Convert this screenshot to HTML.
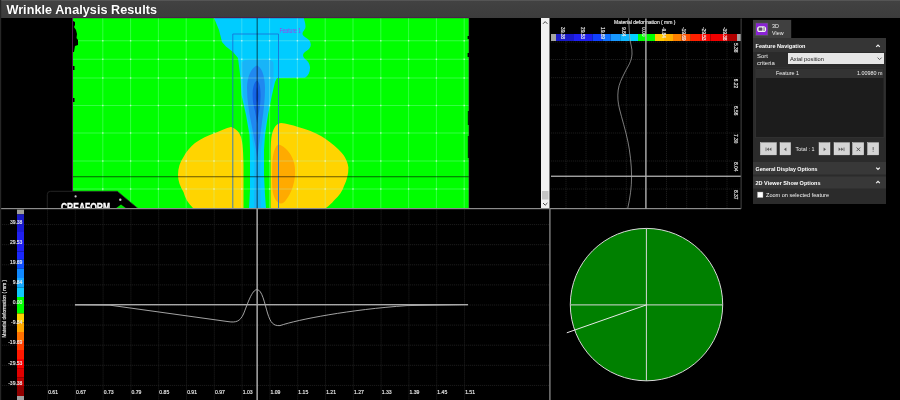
<!DOCTYPE html>
<html>
<head>
<meta charset="utf-8">
<title>Wrinkle Analysis Results</title>
<style>
  html, body { margin: 0; padding: 0; background: #000; }
  body { width: 900px; height: 400px; overflow: hidden; position: relative;
         font-family: "Liberation Sans", sans-serif; color: #fff; }
  #stage { position: absolute; left: 0; top: 0; width: 900px; height: 400px; display: block; will-change: transform; }
  #bl text, #tr text { stroke: #e8e8e8; stroke-width: 0.15px; }
</style>
</head>
<body>
<svg id="stage" width="900" height="400" viewBox="0 0 900 400"
     font-family="Liberation Sans, sans-serif">
  <defs>
    <linearGradient id="hdr" x1="0" y1="0" x2="0" y2="1">
      <stop offset="0" stop-color="#424242"/>
      <stop offset="1" stop-color="#3c3c3c"/>
    </linearGradient>
    <clipPath id="clipTL"><rect x="0" y="18" width="541" height="190.5"/></clipPath>
    <clipPath id="clipGreen"><rect x="72" y="17" width="397.5" height="191"/></clipPath>
  </defs>

  <!-- background -->
  <rect x="0" y="0" width="900" height="400" fill="#000"/>

  <!-- ===== header ===== -->
  <rect x="0" y="0" width="900" height="18" fill="url(#hdr)"/>
  <rect x="0" y="0" width="900" height="1" fill="#555"/>
  <text x="7" y="14" font-size="12.6" font-weight="bold" fill="#000" opacity="0.6" textLength="150.6" lengthAdjust="spacingAndGlyphs">Wrinkle Analysis Results</text>
  <text x="6.4" y="13.5" font-size="12.6" font-weight="bold" fill="#fff" textLength="150.6" lengthAdjust="spacingAndGlyphs">Wrinkle Analysis Results</text>

  <!-- ===== top-left: contour map ===== -->
  <g id="map" clip-path="url(#clipGreen)">
    <rect x="73" y="18" width="396" height="190" fill="#00ff00"/>
    <!-- light cyan -->
    <path fill="#00ccff" d="M214,18 L303.8,18 C304.5,21 305.5,23.5 305.5,26.5 C305.5,30 302.5,31 302.5,34 C303,37.5 310.5,38 310.8,44.5 C310.8,50.5 303.5,51 303,55 C303,59.5 309.5,60 310,67 C310.2,72 308.5,75.5 305,77.8 L277,78 L275,82 L272,95 L268,115 L265,135 L264,150 L264,175 L265,195 L266,208 L249,208 L250,190 L250,150 L249.5,135 L246,115 L241.5,95 L240.5,78 L238,58 L233,52 L226,46.5 L222,42 L219,30 Z"/>
    <!-- sky blue -->
    <path fill="#18b4f8" d="M241.5,63 C243,60.5 246,59.6 250,59.6 L266,59.6 C270,59.6 272.5,60.5 273.5,63 L273.5,78 L270.5,95 L267.5,112 L264,130 L260.8,150 L260.2,175 L260.8,208 L254,208 L254.3,175 L254.3,150 L250.5,130 L246.5,112 L243.5,95 L242.5,78 Z"/>
    <!-- mid blue teardrop -->
    <path fill="#2088f0" d="M257,65.5 C261.5,67 265,76 265,88 C265,100 263.5,112 262,122 C260.8,132 258.8,146 257.3,158 C255.6,146 253,132 251,122 C249,112 247,100 247,88 C247,76 252,67 257,65.5 Z"/>
    <!-- dark blue -->
    <path fill="#1464e4" d="M257,80.5 C259.6,82 260.6,88 260.6,95 C260.6,101 260,106 259.3,110 C258.6,114 257.8,119 257.2,124 C256.5,119 255.5,114 254.7,110 C253.6,106 252.6,101 252.6,95 C252.6,88 254,82 257,80.5 Z"/>
    <path fill="#0c54d8" d="M257,87 C258.1,89 258.4,93 258.4,96 C258.4,99 258,101 257.2,103 C256.3,101 255.8,99 255.8,96 C255.8,93 256.1,89 257,87 Z"/>

    <!-- yellow lobes -->
    <path fill="#ffd400" d="M231,127 C235,128.3 239,131 241,137 C242.8,143 243.3,152 243.5,165 L243.5,208 L193,208 C188,203 185,198 183.5,192 C180,186 178,181 178,175 C178,168 180,162 183.5,157 C186,152 190,147 195,143 C201,138.5 208,135.5 215,133 C221,130.5 226,128 231,127 Z"/>
    <path fill="#ffd400" d="M281,123 C276,123.5 272.5,129 271.3,138 C270.6,144 270.6,152 270.6,160 L270.6,208 L326,208 C329,205.5 332,203 334,200.5 C339,196 342.5,191 344,186 C347,180 348.5,174 348.4,167.6 C347.5,160 343.5,154 338,149 C333,144 327.5,140 321,136 C314,132 306,129 298,127 C292,125 286,123.5 281,123 Z"/>
    <!-- orange -->
    <path fill="#ffaa00" d="M279,144.6 C285,146.5 291,153 293.5,161 C295,165 295.3,170 295,175 C294.5,184 291,194 286,200 C284.5,202 283,203.5 281,203.5 C277,203.5 273.5,198 272.5,190 C272,184 272,170 272.3,163 C272.8,154 275,145 279,144.6 Z"/>
    <!-- grid -->
    <g stroke="#b0ffe0" stroke-width="0.8" opacity="0.38">
      <line x1="102.8" y1="18" x2="102.8" y2="208"/>
      <line x1="130.6" y1="18" x2="130.6" y2="208"/>
      <line x1="158.4" y1="18" x2="158.4" y2="208"/>
      <line x1="186.2" y1="18" x2="186.2" y2="208"/>
      <line x1="214.0" y1="18" x2="214.0" y2="208"/>
      <line x1="241.8" y1="18" x2="241.8" y2="208"/>
      <line x1="269.6" y1="18" x2="269.6" y2="208"/>
      <line x1="297.4" y1="18" x2="297.4" y2="208"/>
      <line x1="325.2" y1="18" x2="325.2" y2="208"/>
      <line x1="353.0" y1="18" x2="353.0" y2="208"/>
      <line x1="380.8" y1="18" x2="380.8" y2="208"/>
      <line x1="408.6" y1="18" x2="408.6" y2="208"/>
      <line x1="436.4" y1="18" x2="436.4" y2="208"/>
      <line x1="464.2" y1="18" x2="464.2" y2="208"/>
      <line x1="73" y1="40.75" x2="469" y2="40.75"/>
      <line x1="73" y1="59.25" x2="469" y2="59.25"/>
      <line x1="73" y1="78" x2="469" y2="78"/>
      <line x1="73" y1="105.5" x2="469" y2="105.5"/>
      <line x1="73" y1="133" x2="469" y2="133"/>
      <line x1="73" y1="161" x2="469" y2="161"/>
      <line x1="73" y1="189" x2="469" y2="189"/>
    </g>
    <g fill="#ffffff" opacity="0.6">
      <rect x="102.1" y="40.05" width="1.4" height="1.4"/>
      <rect x="102.1" y="58.55" width="1.4" height="1.4"/>
      <rect x="102.1" y="77.30" width="1.4" height="1.4"/>
      <rect x="102.1" y="104.80" width="1.4" height="1.4"/>
      <rect x="102.1" y="132.30" width="1.4" height="1.4"/>
      <rect x="102.1" y="160.30" width="1.4" height="1.4"/>
      <rect x="102.1" y="188.30" width="1.4" height="1.4"/>
      <rect x="129.9" y="40.05" width="1.4" height="1.4"/>
      <rect x="129.9" y="58.55" width="1.4" height="1.4"/>
      <rect x="129.9" y="77.30" width="1.4" height="1.4"/>
      <rect x="129.9" y="104.80" width="1.4" height="1.4"/>
      <rect x="129.9" y="132.30" width="1.4" height="1.4"/>
      <rect x="129.9" y="160.30" width="1.4" height="1.4"/>
      <rect x="129.9" y="188.30" width="1.4" height="1.4"/>
      <rect x="157.7" y="40.05" width="1.4" height="1.4"/>
      <rect x="157.7" y="58.55" width="1.4" height="1.4"/>
      <rect x="157.7" y="77.30" width="1.4" height="1.4"/>
      <rect x="157.7" y="104.80" width="1.4" height="1.4"/>
      <rect x="157.7" y="132.30" width="1.4" height="1.4"/>
      <rect x="157.7" y="160.30" width="1.4" height="1.4"/>
      <rect x="157.7" y="188.30" width="1.4" height="1.4"/>
      <rect x="185.5" y="40.05" width="1.4" height="1.4"/>
      <rect x="185.5" y="58.55" width="1.4" height="1.4"/>
      <rect x="185.5" y="77.30" width="1.4" height="1.4"/>
      <rect x="185.5" y="104.80" width="1.4" height="1.4"/>
      <rect x="185.5" y="132.30" width="1.4" height="1.4"/>
      <rect x="185.5" y="160.30" width="1.4" height="1.4"/>
      <rect x="185.5" y="188.30" width="1.4" height="1.4"/>
      <rect x="213.3" y="40.05" width="1.4" height="1.4"/>
      <rect x="213.3" y="58.55" width="1.4" height="1.4"/>
      <rect x="213.3" y="77.30" width="1.4" height="1.4"/>
      <rect x="213.3" y="104.80" width="1.4" height="1.4"/>
      <rect x="213.3" y="132.30" width="1.4" height="1.4"/>
      <rect x="213.3" y="160.30" width="1.4" height="1.4"/>
      <rect x="213.3" y="188.30" width="1.4" height="1.4"/>
      <rect x="241.1" y="40.05" width="1.4" height="1.4"/>
      <rect x="241.1" y="58.55" width="1.4" height="1.4"/>
      <rect x="241.1" y="77.30" width="1.4" height="1.4"/>
      <rect x="241.1" y="104.80" width="1.4" height="1.4"/>
      <rect x="241.1" y="132.30" width="1.4" height="1.4"/>
      <rect x="241.1" y="160.30" width="1.4" height="1.4"/>
      <rect x="241.1" y="188.30" width="1.4" height="1.4"/>
      <rect x="268.9" y="40.05" width="1.4" height="1.4"/>
      <rect x="268.9" y="58.55" width="1.4" height="1.4"/>
      <rect x="268.9" y="77.30" width="1.4" height="1.4"/>
      <rect x="268.9" y="104.80" width="1.4" height="1.4"/>
      <rect x="268.9" y="132.30" width="1.4" height="1.4"/>
      <rect x="268.9" y="160.30" width="1.4" height="1.4"/>
      <rect x="268.9" y="188.30" width="1.4" height="1.4"/>
      <rect x="296.7" y="40.05" width="1.4" height="1.4"/>
      <rect x="296.7" y="58.55" width="1.4" height="1.4"/>
      <rect x="296.7" y="77.30" width="1.4" height="1.4"/>
      <rect x="296.7" y="104.80" width="1.4" height="1.4"/>
      <rect x="296.7" y="132.30" width="1.4" height="1.4"/>
      <rect x="296.7" y="160.30" width="1.4" height="1.4"/>
      <rect x="296.7" y="188.30" width="1.4" height="1.4"/>
      <rect x="324.5" y="40.05" width="1.4" height="1.4"/>
      <rect x="324.5" y="58.55" width="1.4" height="1.4"/>
      <rect x="324.5" y="77.30" width="1.4" height="1.4"/>
      <rect x="324.5" y="104.80" width="1.4" height="1.4"/>
      <rect x="324.5" y="132.30" width="1.4" height="1.4"/>
      <rect x="324.5" y="160.30" width="1.4" height="1.4"/>
      <rect x="324.5" y="188.30" width="1.4" height="1.4"/>
      <rect x="352.3" y="40.05" width="1.4" height="1.4"/>
      <rect x="352.3" y="58.55" width="1.4" height="1.4"/>
      <rect x="352.3" y="77.30" width="1.4" height="1.4"/>
      <rect x="352.3" y="104.80" width="1.4" height="1.4"/>
      <rect x="352.3" y="132.30" width="1.4" height="1.4"/>
      <rect x="352.3" y="160.30" width="1.4" height="1.4"/>
      <rect x="352.3" y="188.30" width="1.4" height="1.4"/>
      <rect x="380.1" y="40.05" width="1.4" height="1.4"/>
      <rect x="380.1" y="58.55" width="1.4" height="1.4"/>
      <rect x="380.1" y="77.30" width="1.4" height="1.4"/>
      <rect x="380.1" y="104.80" width="1.4" height="1.4"/>
      <rect x="380.1" y="132.30" width="1.4" height="1.4"/>
      <rect x="380.1" y="160.30" width="1.4" height="1.4"/>
      <rect x="380.1" y="188.30" width="1.4" height="1.4"/>
      <rect x="407.9" y="40.05" width="1.4" height="1.4"/>
      <rect x="407.9" y="58.55" width="1.4" height="1.4"/>
      <rect x="407.9" y="77.30" width="1.4" height="1.4"/>
      <rect x="407.9" y="104.80" width="1.4" height="1.4"/>
      <rect x="407.9" y="132.30" width="1.4" height="1.4"/>
      <rect x="407.9" y="160.30" width="1.4" height="1.4"/>
      <rect x="407.9" y="188.30" width="1.4" height="1.4"/>
      <rect x="435.7" y="40.05" width="1.4" height="1.4"/>
      <rect x="435.7" y="58.55" width="1.4" height="1.4"/>
      <rect x="435.7" y="77.30" width="1.4" height="1.4"/>
      <rect x="435.7" y="104.80" width="1.4" height="1.4"/>
      <rect x="435.7" y="132.30" width="1.4" height="1.4"/>
      <rect x="435.7" y="160.30" width="1.4" height="1.4"/>
      <rect x="435.7" y="188.30" width="1.4" height="1.4"/>
      <rect x="463.5" y="40.05" width="1.4" height="1.4"/>
      <rect x="463.5" y="58.55" width="1.4" height="1.4"/>
      <rect x="463.5" y="77.30" width="1.4" height="1.4"/>
      <rect x="463.5" y="104.80" width="1.4" height="1.4"/>
      <rect x="463.5" y="132.30" width="1.4" height="1.4"/>
      <rect x="463.5" y="160.30" width="1.4" height="1.4"/>
      <rect x="463.5" y="188.30" width="1.4" height="1.4"/>
    </g>
    <!-- feature rectangle -->
    <path d="M232.8,208 L232.8,34 L278.5,34 L278.5,208" fill="none" stroke="#1a6fd8" stroke-width="1" opacity="0.85"/>
    <text x="279.4" y="32.8" font-size="6.6" fill="#a040e8" textLength="21.8" lengthAdjust="spacingAndGlyphs">Feature 1</text>
    <!-- cursor lines (dark) -->
    <line x1="257.2" y1="18" x2="257.2" y2="208" stroke="#000" stroke-width="1.2" opacity="0.55"/>
    <line x1="73" y1="176.8" x2="469" y2="176.8" stroke="#000" stroke-width="1.1" opacity="0.6"/>
    <!-- ragged left edge -->
    <path fill="#000" d="M73,21 L75,22 L75,25 L74,27 L76,30 L77,34 L76.5,38 L78,40 L78,45 L75,46 L74,52 L73,52 Z"/>
    <rect x="73" y="66" width="1.5" height="4" fill="#000"/>
    <rect x="73" y="98" width="1.5" height="4" fill="#000"/>
    <line x1="72.5" y1="18" x2="72.5" y2="208" stroke="#903090" stroke-width="0.8" opacity="0.7"/>
    <rect x="73" y="17.2" width="396" height="1" fill="#501850"/>
    <rect x="468.6" y="18" width="0.8" height="190" fill="#501850" opacity="0.8"/>
    <rect x="467.6" y="36" width="1.4" height="3" fill="#000"/><rect x="467.6" y="53" width="1.4" height="4" fill="#000"/><rect x="467.8" y="111" width="1.2" height="14" fill="#000" opacity="0.8"/><rect x="467.8" y="136" width="1.2" height="22" fill="#000" opacity="0.8"/>
  </g>

  <!-- CREAFORM logo -->
  <g clip-path="url(#clipTL)">
    <path d="M47.3,209 L47.3,194.5 Q47.3,191.3 50.5,191.3 L117.3,191.3 L138.5,209 Z" fill="#000" stroke="#2c2c2c" stroke-width="0.8"/>
    <text x="61" y="210.6" font-size="10.6" font-weight="bold" fill="#fff" stroke="#fff" stroke-width="0.35" textLength="49" lengthAdjust="spacingAndGlyphs">CREAFORM</text>
    <circle cx="75.6" cy="196.4" r="1.1" fill="#c8c8c8"/>
    <circle cx="120.3" cy="199.7" r="1.2" fill="#c8c8c8"/>
    <path d="M115,209 L121,204.6 L127,209 Z" fill="#00e000"/>
  </g>

  <!-- scrollbar -->
  <rect x="541" y="18" width="8.5" height="190" fill="#f0f0f0"/>
  <rect x="542" y="191" width="6.5" height="8.5" fill="#c4c4c4"/>
  <path d="M543,23.8 L545.2,21.6 L547.4,23.8" fill="none" stroke="#444" stroke-width="1"/>
  <path d="M543,203 L545.2,205.2 L547.4,203" fill="none" stroke="#444" stroke-width="1"/>

  <!-- panel separators -->
  <rect x="0" y="208" width="741" height="1.2" fill="#8c8c8c"/>
  <rect x="549.2" y="208" width="1.4" height="192" fill="#808080"/>
  <rect x="0" y="0" width="1.2" height="400" fill="#262626"/>
  <!-- ===== bottom-left: profile chart ===== -->
  <g id="bl">
    <g stroke="#4a4a4a" stroke-width="0.9" stroke-dasharray="1.2 0.8" opacity="0.42">
      <line x1="47.5" y1="209.5" x2="47.5" y2="400"/>
      <line x1="75.3" y1="209.5" x2="75.3" y2="400"/>
      <line x1="103.1" y1="209.5" x2="103.1" y2="400"/>
      <line x1="130.9" y1="209.5" x2="130.9" y2="400"/>
      <line x1="158.7" y1="209.5" x2="158.7" y2="400"/>
      <line x1="186.5" y1="209.5" x2="186.5" y2="400"/>
      <line x1="214.3" y1="209.5" x2="214.3" y2="400"/>
      <line x1="242.1" y1="209.5" x2="242.1" y2="400"/>
      <line x1="269.9" y1="209.5" x2="269.9" y2="400"/>
      <line x1="297.7" y1="209.5" x2="297.7" y2="400"/>
      <line x1="325.5" y1="209.5" x2="325.5" y2="400"/>
      <line x1="353.3" y1="209.5" x2="353.3" y2="400"/>
      <line x1="381.1" y1="209.5" x2="381.1" y2="400"/>
      <line x1="408.9" y1="209.5" x2="408.9" y2="400"/>
      <line x1="436.7" y1="209.5" x2="436.7" y2="400"/>
      <line x1="464.5" y1="209.5" x2="464.5" y2="400"/>
      <line x1="2" y1="224.6" x2="549" y2="224.6"/>
      <line x1="2" y1="244.7" x2="549" y2="244.7"/>
      <line x1="2" y1="264.8" x2="549" y2="264.8"/>
      <line x1="2" y1="284.9" x2="549" y2="284.9"/>
      <line x1="2" y1="305.0" x2="549" y2="305.0"/>
      <line x1="2" y1="325.1" x2="549" y2="325.1"/>
      <line x1="2" y1="345.2" x2="549" y2="345.2"/>
      <line x1="2" y1="365.3" x2="549" y2="365.3"/>
      <line x1="2" y1="385.4" x2="549" y2="385.4"/>
    </g>
    <rect x="17" y="209.6" width="7" height="4.70" fill="#a0a098"/>
    <rect x="17" y="214.3" width="7" height="10.70" fill="#1a1ac4"/>
    <rect x="17" y="225" width="7" height="7.00" fill="#1a1ad4"/>
    <rect x="17" y="232" width="7" height="19.50" fill="#2020f0"/>
    <rect x="17" y="251.5" width="7" height="7.90" fill="#1a28fc"/>
    <rect x="17" y="259.4" width="7" height="9.35" fill="#1050ff"/>
    <rect x="17" y="268.75" width="7" height="9.25" fill="#1088ff"/>
    <rect x="17" y="278" width="7" height="9.50" fill="#18a8ff"/>
    <rect x="17" y="287.5" width="7" height="9.50" fill="#10c8ff"/>
    <rect x="17" y="297" width="7" height="16.50" fill="#00ff00"/>
    <rect x="17" y="313.5" width="7" height="9.00" fill="#ffd000"/>
    <rect x="17" y="322.5" width="7" height="9.50" fill="#ffa800"/>
    <rect x="17" y="332" width="7" height="9.00" fill="#ff7000"/>
    <rect x="17" y="341" width="7" height="9.00" fill="#ff4000"/>
    <rect x="17" y="350" width="7" height="9.00" fill="#ff1800"/>
    <rect x="17" y="359" width="7" height="9.75" fill="#f80000"/>
    <rect x="17" y="368.75" width="7" height="8.75" fill="#e00000"/>
    <rect x="17" y="377.5" width="7" height="8.50" fill="#c00000"/>
    <rect x="17" y="386" width="7" height="10.00" fill="#900000"/>
    <rect x="17" y="396" width="7" height="4.00" fill="#a0a0a0"/>
    <text x="22.4" y="223.8" font-size="5" fill="#e8e8e8" text-anchor="end">39.38</text>
    <text x="22.4" y="243.9" font-size="5" fill="#e8e8e8" text-anchor="end">29.53</text>
    <text x="22.4" y="264.0" font-size="5" fill="#e8e8e8" text-anchor="end">19.69</text>
    <text x="22.4" y="284.1" font-size="5" fill="#e8e8e8" text-anchor="end">9.84</text>
    <text x="22.4" y="304.2" font-size="5" fill="#e8e8e8" text-anchor="end">0.00</text>
    <text x="22.4" y="324.3" font-size="5" fill="#e8e8e8" text-anchor="end">-9.84</text>
    <text x="22.4" y="344.4" font-size="5" fill="#e8e8e8" text-anchor="end">-19.69</text>
    <text x="22.4" y="364.5" font-size="5" fill="#e8e8e8" text-anchor="end">-29.53</text>
    <text x="22.4" y="384.6" font-size="5" fill="#e8e8e8" text-anchor="end">-39.38</text>
    <text transform="translate(5.5,308.8) rotate(-90)" font-size="4.7" fill="#e0e0e0" text-anchor="middle">Material deformation ( mm )</text>
    <text x="53.1" y="393.6" font-size="5.1" fill="#e8e8e8" text-anchor="middle">0.61</text>
    <text x="80.9" y="393.6" font-size="5.1" fill="#e8e8e8" text-anchor="middle">0.67</text>
    <text x="108.7" y="393.6" font-size="5.1" fill="#e8e8e8" text-anchor="middle">0.73</text>
    <text x="136.5" y="393.6" font-size="5.1" fill="#e8e8e8" text-anchor="middle">0.79</text>
    <text x="164.3" y="393.6" font-size="5.1" fill="#e8e8e8" text-anchor="middle">0.85</text>
    <text x="192.1" y="393.6" font-size="5.1" fill="#e8e8e8" text-anchor="middle">0.91</text>
    <text x="219.9" y="393.6" font-size="5.1" fill="#e8e8e8" text-anchor="middle">0.97</text>
    <text x="247.7" y="393.6" font-size="5.1" fill="#e8e8e8" text-anchor="middle">1.03</text>
    <text x="275.5" y="393.6" font-size="5.1" fill="#e8e8e8" text-anchor="middle">1.09</text>
    <text x="303.3" y="393.6" font-size="5.1" fill="#e8e8e8" text-anchor="middle">1.15</text>
    <text x="331.1" y="393.6" font-size="5.1" fill="#e8e8e8" text-anchor="middle">1.21</text>
    <text x="358.9" y="393.6" font-size="5.1" fill="#e8e8e8" text-anchor="middle">1.27</text>
    <text x="386.7" y="393.6" font-size="5.1" fill="#e8e8e8" text-anchor="middle">1.33</text>
    <text x="414.5" y="393.6" font-size="5.1" fill="#e8e8e8" text-anchor="middle">1.39</text>
    <text x="442.3" y="393.6" font-size="5.1" fill="#e8e8e8" text-anchor="middle">1.45</text>
    <text x="470.1" y="393.6" font-size="5.1" fill="#e8e8e8" text-anchor="middle">1.51</text>
    <path d="M75,304.9 L110,305.2 L228,321.6 C236,322.8 240,321.5 243.5,314 C247.5,304 252,289.6 257,289.6 C262,289.6 264.5,303 267.5,313 C270.5,323 273.5,326 280,325.6 C298,319.5 350,309.5 407,305.6 L440,305 L468,304.5" fill="none" stroke="#b4b4b4" stroke-width="0.9"/>
    <rect x="75" y="304" width="393" height="1.4" fill="#a8a8a8"/>
    <rect x="256.4" y="209" width="1.5" height="191" fill="#a8a8a8"/>
  </g>
  <!-- ===== top-right: axial profile ===== -->
  <g id="tr">
    <g stroke="#4a4a4a" stroke-width="0.9" stroke-dasharray="1.2 0.8" opacity="0.42">
      <line x1="566" y1="41" x2="566" y2="208"/>
      <line x1="586" y1="41" x2="586" y2="208"/>
      <line x1="606" y1="41" x2="606" y2="208"/>
      <line x1="626.3" y1="41" x2="626.3" y2="208"/>
      <line x1="666.5" y1="41" x2="666.5" y2="208"/>
      <line x1="686.7" y1="41" x2="686.7" y2="208"/>
      <line x1="706.8" y1="41" x2="706.8" y2="208"/>
      <line x1="727" y1="41" x2="727" y2="208"/>
      <line x1="551" y1="42" x2="741" y2="42"/>
      <line x1="551" y1="59.5" x2="741" y2="59.5"/>
      <line x1="551" y1="77.7" x2="741" y2="77.7"/>
      <line x1="551" y1="105" x2="741" y2="105"/>
      <line x1="551" y1="133" x2="741" y2="133"/>
      <line x1="551" y1="161" x2="741" y2="161"/>
      <line x1="551" y1="189" x2="741" y2="189"/>
    </g>
    <text x="644.8" y="23.5" font-size="5" fill="#e8e8e8" text-anchor="middle">Material deformation ( mm )</text>
    <rect x="551" y="34" width="5.00" height="7" fill="#a4a4a0"/>
    <rect x="556" y="34" width="18.00" height="7" fill="#1a1ac8"/>
    <rect x="574" y="34" width="18.40" height="7" fill="#2020f0"/>
    <rect x="592.4" y="34" width="10.00" height="7" fill="#1040ff"/>
    <rect x="602.4" y="34" width="8.40" height="7" fill="#1070ff"/>
    <rect x="610.8" y="34" width="9.40" height="7" fill="#1898ff"/>
    <rect x="620.2" y="34" width="9.50" height="7" fill="#10b8ff"/>
    <rect x="629.7" y="34" width="8.30" height="7" fill="#00d0ff"/>
    <rect x="638" y="34" width="17.00" height="7" fill="#00ff00"/>
    <rect x="655" y="34" width="9.00" height="7" fill="#ffc800"/>
    <rect x="664" y="34" width="9.00" height="7" fill="#ffb000"/>
    <rect x="673" y="34" width="8.70" height="7" fill="#ff8000"/>
    <rect x="681.7" y="34" width="9.10" height="7" fill="#ff5000"/>
    <rect x="690.8" y="34" width="9.20" height="7" fill="#ff2000"/>
    <rect x="700" y="34" width="10.50" height="7" fill="#fc0800"/>
    <rect x="710.5" y="34" width="17.30" height="7" fill="#f00000"/>
    <rect x="727.8" y="34" width="9.20" height="7" fill="#b00000"/>
    <rect x="737" y="34" width="4.00" height="7" fill="#a4a4a4"/>
    <text transform="translate(560.9,27) rotate(90)" font-size="4.8" fill="#e8e8e8">39.38</text>
    <text transform="translate(581.1,27) rotate(90)" font-size="4.8" fill="#e8e8e8">29.53</text>
    <text transform="translate(601.3,27) rotate(90)" font-size="4.8" fill="#e8e8e8">19.69</text>
    <text transform="translate(621.5,27) rotate(90)" font-size="4.8" fill="#e8e8e8">9.84</text>
    <text transform="translate(641.7,27) rotate(90)" font-size="4.8" fill="#e8e8e8">0.00</text>
    <text transform="translate(661.9,26.9) rotate(90)" font-size="4.8" fill="#e8e8e8">-9.84</text>
    <text transform="translate(682.1,26.9) rotate(90)" font-size="4.8" fill="#e8e8e8">-19.69</text>
    <text transform="translate(702.3,26.9) rotate(90)" font-size="4.8" fill="#e8e8e8">-29.53</text>
    <text transform="translate(722.5,26.9) rotate(90)" font-size="4.8" fill="#e8e8e8">-39.38</text>
    <text transform="translate(733.6,43.0) rotate(90)" font-size="4.9" fill="#e0e0e0">5.38</text>
    <text transform="translate(733.6,78.7) rotate(90)" font-size="4.9" fill="#e0e0e0">6.22</text>
    <text transform="translate(733.6,106.0) rotate(90)" font-size="4.9" fill="#e0e0e0">6.56</text>
    <text transform="translate(733.6,134.0) rotate(90)" font-size="4.9" fill="#e0e0e0">7.30</text>
    <text transform="translate(733.6,162.0) rotate(90)" font-size="4.9" fill="#e0e0e0">8.04</text>
    <text transform="translate(733.6,190.0) rotate(90)" font-size="4.9" fill="#e0e0e0">8.37</text>
    <path d="M628.7,18 C628.8,24 629.3,32 629.8,38 C630.5,44 632.3,48 632,54 C631.5,62 628,66 625,72 C621.5,79 619,84 618.2,90 C617.3,97 618,103 619.5,109 C622,119 625.5,130 628,142 C630,152 631.5,164 631.6,176 C631.6,188 630,198 627.8,208" fill="none" stroke="#b0b0b0" stroke-width="0.7"/>
    <rect x="551" y="175.6" width="190" height="1.3" fill="#b0b0b0"/>
    <rect x="645.2" y="18.5" width="1.4" height="190" fill="#b0b0b0"/>
    <rect x="740.6" y="18.5" width="1" height="190.5" fill="#444"/>
  </g>
  <!-- ===== bottom-right: section circle ===== -->
  <g id="br">
    <circle cx="646.5" cy="304.6" r="76.2" fill="#008000" stroke="#d8d8d8" stroke-width="1"/>
    <line x1="646.4" y1="228.4" x2="646.4" y2="380.8" stroke="#d8d8d8" stroke-width="1"/>
    <line x1="570.3" y1="304.9" x2="722.7" y2="304.9" stroke="#d8d8d8" stroke-width="1"/>
    <line x1="646.4" y1="304.9" x2="566.8" y2="332.8" stroke="#e8e8e8" stroke-width="1"/>
  </g>
  <!-- ===== side panel ===== -->
  <g id="side">
    <rect x="753" y="19.9" width="38.2" height="18.1" fill="#404040"/>
    <rect x="755.5" y="22.8" width="12.6" height="12.8" fill="#5a6a50"/>
    <rect x="756" y="23.3" width="11.6" height="11.8" fill="#8a22d6"/>
    <rect x="757.1" y="26.2" width="9" height="5.8" rx="2.6" fill="#f4f4f4"/>
    <rect x="758.6" y="27.4" width="3.8" height="3.4" rx="0.6" fill="#5a4a6a"/>
    <rect x="763.6" y="27.2" width="0.9" height="3.8" fill="#5a4a6a"/>
    <text x="772" y="27.6" font-size="5.9" fill="#f0f0f0" textLength="6.9" lengthAdjust="spacingAndGlyphs">3D</text>
    <text x="772" y="35" font-size="5.9" fill="#f0f0f0" textLength="11.5" lengthAdjust="spacingAndGlyphs">View</text>
    <rect x="753" y="38" width="133" height="166" fill="#2b2b2b"/>
    <rect x="753" y="38" width="133" height="14" fill="#353535"/>
    <text x="755.5" y="47.8" font-size="5.9" font-weight="bold" fill="#ffffff" textLength="50" lengthAdjust="spacingAndGlyphs">Feature Navigation</text>
    <path d="M876.2,46.9 L878,45.1 L879.8,46.9" fill="none" stroke="#f0f0f0" stroke-width="1.2"/>
    <text x="757" y="57.8" font-size="5.9" fill="#f0f0f0">Sort</text>
    <text x="757" y="65.2" font-size="5.9" fill="#f0f0f0">criteria</text>
    <rect x="788" y="53" width="96" height="11" fill="#e6e6e6"/>
    <text x="790" y="61" font-size="5.9" fill="#202020" textLength="34" lengthAdjust="spacingAndGlyphs">Axial position</text>
    <path d="M877.6,57.6 L879.6,59.6 L881.6,57.6" fill="none" stroke="#404040" stroke-width="0.8"/>
    <rect x="755.5" y="68" width="128.5" height="69.5" fill="#1c1c1c" stroke="#3a3a3a" stroke-width="0.6"/>
    <rect x="756" y="68.5" width="127.5" height="9.5" fill="#333333"/>
    <text x="776" y="75.4" font-size="5.9" fill="#f0f0f0" textLength="23" lengthAdjust="spacingAndGlyphs">Feature 1</text>
    <text x="882.5" y="75.4" font-size="5.9" fill="#f0f0f0" text-anchor="end" textLength="25.5" lengthAdjust="spacingAndGlyphs">1.00980 m</text>
    <rect x="760.4" y="142.7" width="16" height="12.2" fill="#d4d4d4" stroke="#ececec" stroke-width="0.4"/>
    <rect x="780" y="142.7" width="10.6" height="12.2" fill="#d4d4d4" stroke="#ececec" stroke-width="0.4"/>
    <rect x="819" y="142.7" width="11" height="12.2" fill="#d4d4d4" stroke="#ececec" stroke-width="0.4"/>
    <rect x="834" y="142.7" width="15.6" height="12.2" fill="#d4d4d4" stroke="#ececec" stroke-width="0.4"/>
    <rect x="852.6" y="142.7" width="11.1" height="12.2" fill="#d4d4d4" stroke="#ececec" stroke-width="0.4"/>
    <rect x="867.6" y="142.7" width="11.1" height="12.2" fill="#d4d4d4" stroke="#ececec" stroke-width="0.4"/>
    <g fill="#5a5a5a">
      <rect x="765.6" y="147.5" width="0.8" height="3.6"/><path d="M768.9,147.5 L766.7,149.3 L768.9,151.1 Z"/><path d="M771.4,147.5 L769.2,149.3 L771.4,151.1 Z"/>
      <path d="M786.4,147.4 L784,149.3 L786.4,151.2 Z"/>
      <path d="M823.6,147.4 L826,149.3 L823.6,151.2 Z"/>
      <path d="M838.6,147.5 L840.8,149.3 L838.6,151.1 Z"/><path d="M841.1,147.5 L843.3,149.3 L841.1,151.1 Z"/><rect x="843.6" y="147.5" width="0.8" height="3.6"/>
      <rect x="872.7" y="147" width="0.9" height="3"/><rect x="872.7" y="150.8" width="0.9" height="0.9"/>
    </g>
    <path d="M856.6,147.5 L860.2,151.1 M860.2,147.5 L856.6,151.1" stroke="#4a4a4a" stroke-width="0.9" fill="none"/>
    <text x="795.5" y="151.4" font-size="5.8" fill="#f0f0f0" textLength="19" lengthAdjust="spacingAndGlyphs">Total : 1</text>
    <rect x="753" y="162" width="133" height="12.5" fill="#383838"/>
    <text x="755.5" y="170.8" font-size="5.9" font-weight="bold" fill="#ffffff" textLength="62" lengthAdjust="spacingAndGlyphs">General Display Options</text>
    <path d="M876.2,167.6 L878,169.4 L879.8,167.6" fill="none" stroke="#f0f0f0" stroke-width="1.2"/>
    <rect x="753" y="176.5" width="133" height="12" fill="#383838"/>
    <text x="755.5" y="184.6" font-size="5.9" font-weight="bold" fill="#ffffff" textLength="65" lengthAdjust="spacingAndGlyphs">2D Viewer Show Options</text>
    <path d="M876.2,183.2 L878,181.4 L879.8,183.2" fill="none" stroke="#f0f0f0" stroke-width="1.2"/>
    <rect x="757.4" y="192" width="5.6" height="5.6" fill="#ffffff" stroke="#909090" stroke-width="0.4"/>
    <text x="766" y="197.2" font-size="5.9" fill="#f0f0f0" textLength="63" lengthAdjust="spacingAndGlyphs">Zoom on selected feature</text>
  </g>
</svg>
</body>
</html>
